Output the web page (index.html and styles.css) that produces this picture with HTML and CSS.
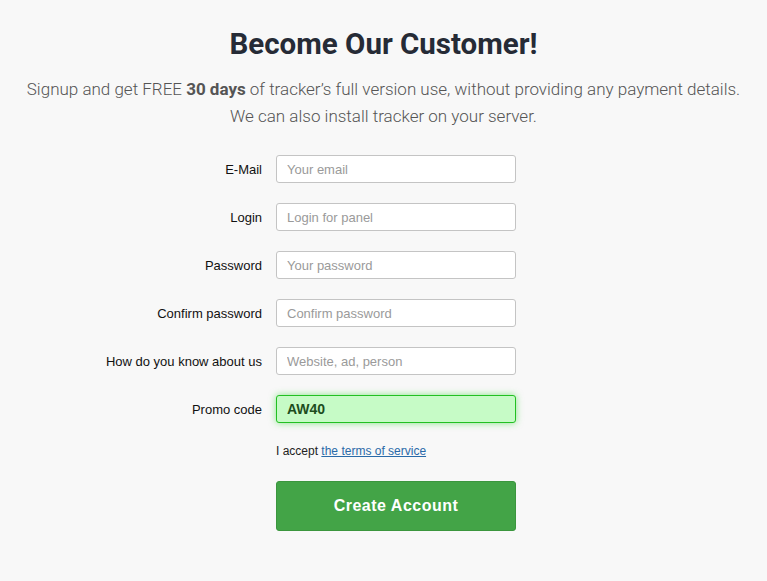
FILE: index.html
```html
<!DOCTYPE html>
<html lang="en">
<head>
<meta charset="utf-8">
<title>Become Our Customer!</title>
<link rel="stylesheet" href="styles.css">
</head>
<body>
<main class="page">
  <h1 class="title">Become Our Customer!</h1>
  <p class="lead">Signup and get FREE <b>30 days</b> of tracker’s full version use, without providing any payment details.<br>We can also install tracker on your server.</p>
  <form class="form">
    <div class="row"><label class="label">E-Mail</label><input class="input" type="text" placeholder="Your email"></div>
    <div class="row"><label class="label">Login</label><input class="input" type="text" placeholder="Login for panel"></div>
    <div class="row"><label class="label">Password</label><input class="input" type="text" placeholder="Your password"></div>
    <div class="row"><label class="label">Confirm password</label><input class="input" type="text" placeholder="Confirm password"></div>
    <div class="row"><label class="label">How do you know about us</label><input class="input" type="text" placeholder="Website, ad, person"></div>
    <div class="row"><label class="label">Promo code</label><input class="input input-ok" type="text" value="AW40"></div>
    <div class="row terms-row"><span class="label"></span><span class="terms">I accept <a href="#">the terms of service</a></span></div>
    <div class="row btn-row"><span class="label"></span><button class="btn" type="button">Create Account</button></div>
  </form>
</main>
</body>
</html>
```
FILE: styles.css
```css
html, body { margin: 0; padding: 0; }
body {
  background: #f8f8f8;
  font-family: "Liberation Sans", Arial, sans-serif;
  color: #222;
}
.page {
  padding-top: 26px;
  text-align: center;
}
.title {
  margin: 0;
  font-family: Roboto, sans-serif;
  font-weight: 700;
  font-size: 29.5px;
  line-height: 36px;
  color: #262b36;
}
.lead {
  margin: 14px 0 0;
  font-family: Roboto, sans-serif;
  font-weight: 300;
  font-size: 17px;
  line-height: 27px;
  color: #555;
}
.lead b { font-weight: 700; }
.form {
  margin-top: 25px;
  display: flex;
  flex-direction: column;
  gap: 20px;
}
.row {
  display: flex;
  align-items: center;
  gap: 14px;
}
.label {
  width: 262px;
  flex: none;
  text-align: right;
  font-size: 13px;
  color: #111;
}
.input {
  box-sizing: border-box;
  width: 240px;
  height: 28px;
  margin: 0;
  padding: 0 10px;
  border: 1px solid #c4c4c4;
  border-radius: 3px;
  background: #fff;
  font-family: "Liberation Sans", Arial, sans-serif;
  font-size: 13px;
  color: #222;
  outline: none;
}
.input::placeholder { color: #9a9a9a; }
.input-ok {
  background: #c6fbc6;
  border-color: #22c022;
  box-shadow: 0 0 7px rgba(40, 210, 40, 0.55);
  font-weight: 700;
  font-size: 14px;
  color: #1d4d1d;
}
.terms-row { margin-top: 1px; }
.terms { font-size: 12px; color: #222; }
.terms a { color: #2a6aa8; text-decoration: underline; }
.btn-row { margin-top: 3px; }
.btn {
  box-sizing: border-box;
  width: 240px;
  height: 50px;
  border: 1px solid #3b963e;
  border-radius: 3px;
  background: #43a447;
  color: #fff;
  font-family: "Liberation Sans", Arial, sans-serif;
  font-weight: 700;
  font-size: 16px;
  letter-spacing: 0.5px;
  cursor: pointer;
}
```
